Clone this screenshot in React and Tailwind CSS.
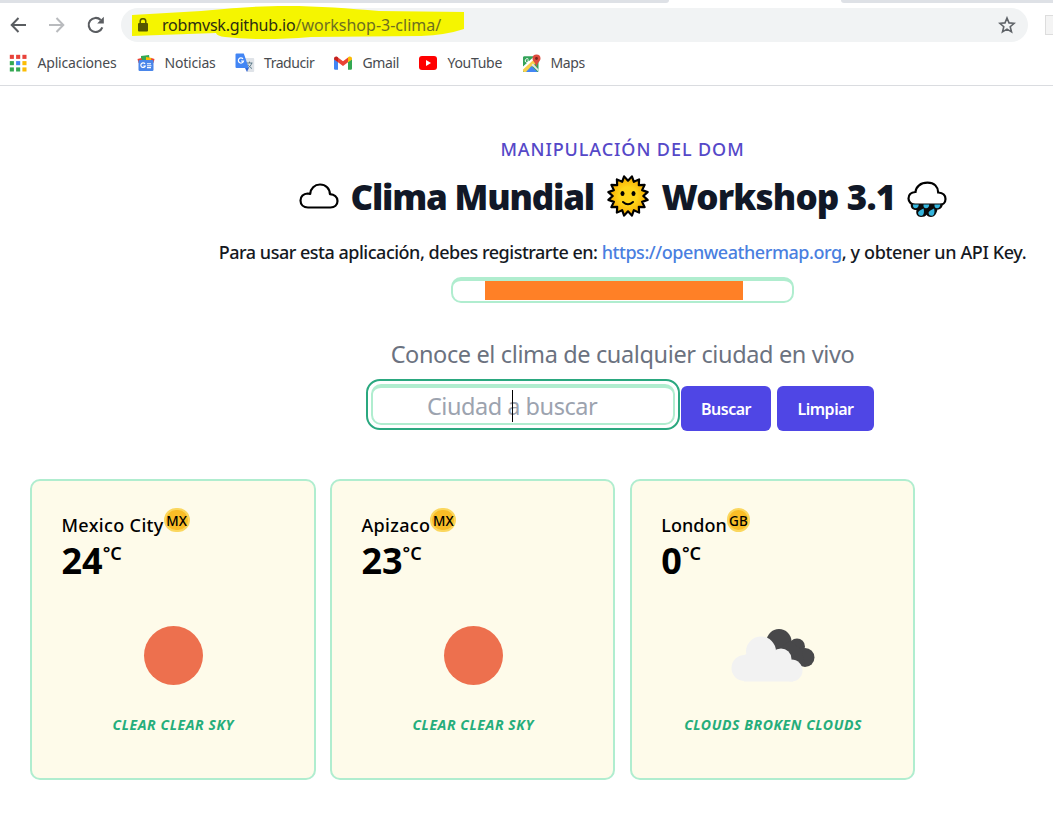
import React from "react";

const FONT = "font-['Noto_Sans','Open_Sans',sans-serif]";

function AppsIcon() {
  const colors = ["#e8433a", "#e8433a", "#e8433a", "#34a853", "#4285f4", "#fbbc05", "#34a853", "#34a853", "#fbbc05"];
  return (
    <svg width="18" height="18" viewBox="0 0 18 18">
      {colors.map((c, i) => (
        <rect key={i} x={0.8 + (i % 3) * 6.3} y={0.8 + Math.floor(i / 3) * 6.3} width="4.1" height="4.1" fill={c} />
      ))}
    </svg>
  );
}

function NewsIcon() {
  return (
    <svg width="18" height="18" viewBox="0 0 18 18">
      <path d="M4 2l8-1 1 6H4z" fill="#34a853" />
      <path d="M9 3l6 1-1 5H9z" fill="#fbbc05" />
      <path d="M.5 5l4-1 1 4-4 1zM17.5 5l-3-1-1 4 3 1z" fill="#ea4335" />
      <rect x="1.5" y="6" width="15" height="11" rx="1.2" fill="#4a86ea" />
      <path d="M8 9.8A2.3 2.3 0 1 0 8.3 12H6.3" fill="none" stroke="#fff" strokeWidth="1.2" />
      <path d="M10 9.7h4M10 11.7h4.4M10 13.6h4" stroke="#fff" strokeWidth="1.1" />
    </svg>
  );
}

function TranslateIcon() {
  return (
    <svg width="20" height="20" viewBox="0 0 20 20">
      <path d="M8 5h10.2a1 1 0 0 1 1 1v12a1 1 0 0 1-1 1H12z" fill="#dfe3e8" />
      <path d="M11.5 10h6M14.5 8.6V10M16.7 10c-.5 2.3-2 4-4 5.2M13 11.5c.8 1.8 2.3 3.2 4 4" stroke="#607d8b" strokeWidth="1" fill="none" />
      <path d="M1.6.5h7.2l5 14.5H1.6A1.1 1.1 0 0 1 .5 13.900V1.600A1.100 1.100 0 0 1 1.600.5z" fill="#4285f4" />
      <path d="M10 15h3.800L12 19z" fill="#3367d6" />
      <path d="M8 5.800A2.600 2.600 0 1 0 8.500 8H6" fill="none" stroke="#fff" strokeWidth="1.200" />
    </svg>
  );
}

function GmailIcon() {
  return (
    <svg width="18" height="14" viewBox="0 0 18 14">
      <path d="M0 3v9.500A1.200 1.200 0 0 0 1.200 13.700H4V6z" fill="#4285f4" />
      <path d="M18 3v9.500a1.200 1.200 0 0 1-1.200 1.200H14V6z" fill="#34a853" />
      <path d="M4 6.200V1.500l5 3.800 5-3.800v4.700L9 10z" fill="#ea4335" />
      <path d="M0 2.500C0 .6 2.100-.2 3.500.9L4 1.300v5L0 3.400z" fill="#c5221f" />
      <path d="M18 2.500c0-1.900-2.100-2.700-3.500-1.600l-.5.400v5l4-2.900z" fill="#fbbc04" />
    </svg>
  );
}

function YoutubeIcon() {
  return (
    <svg width="18" height="14" viewBox="0 0 18 14">
      <rect width="18" height="14" rx="3" fill="#f00" />
      <path d="M7 4l5 3-5 3z" fill="#fff" />
    </svg>
  );
}

function MapsIcon() {
  return (
    <svg width="19" height="19" viewBox="0 0 19 19">
      <rect x="1" y="2.500" width="15.500" height="15.500" rx="1" fill="#34a35a" />
      <path d="M1 17V14L13 3l3.500 3.500L5 18H2z" fill="#f7d04b" />
      <path d="M1 12.500L12 2.500l1.500 1.500L1 15.500z" fill="#fff" />
      <path d="M4 18l5.500-6 6 6z" fill="#4285f4" />
      <path d="M9.500 11l1.500-1.500 5.500 6v2.300z" fill="#e4e6ea" />
      <path d="M1 12V3.500L2 2.500h9.500z" fill="#34a35a" />
      <path d="M6.500 5.300A1.900 1.900 0 1 0 7 7H5.300" fill="none" stroke="#fff" strokeWidth="1" />
      <path d="M14.500.500a4 4 0 0 1 4 4c0 2.800-3.200 3.900-4 8.500-.8-4.600-4-5.700-4-8.500a4 4 0 0 1 4-4z" fill="#dd4b3e" />
      <circle cx="14.500" cy="4.500" r="1.400" fill="#7c231c" />
    </svg>
  );
}

function CloudIcon() {
  return (
    <svg className="shrink-0" width="40" height="28" viewBox="0 0 40 28">
      <path d="M9 25.500C4.500 25.500 1.500 22.500 1.500 18.500S4.500 11.600 8.500 11.500c1.200 0 1.900.1 2.700.4C11.500 6.500 15.500 2.500 21 2.500c5.800 0 9.800 4.100 9.900 9.600 4.200.3 7.600 2.700 7.600 6.900 0 4-3 6.500-7 6.500z" fill="#fff" stroke="#000" strokeWidth="2.200" strokeLinejoin="round" />
    </svg>
  );
}

function SunIcon() {
  const pts = [];
  for (let i = 0; i < 32; i++) {
    const a = (i * Math.PI) / 16 + Math.PI / 16;
    const r = i % 2 ? 15.300 : 20;
    pts.push(`${21 + r * Math.cos(a)},${21 + r * Math.sin(a)}`);
  }
  return (
    <svg width="42" height="42" viewBox="0 0 42 42">
      <defs>
        <radialGradient id="sun">
          <stop offset="45%" stopColor="#ffd51a" />
          <stop offset="100%" stopColor="#f7a900" />
        </radialGradient>
      </defs>
      <polygon points={pts.join(" ")} fill="url(#sun)" stroke="#000" strokeWidth="2.200" strokeLinejoin="round" />
      <ellipse cx="15.500" cy="18.500" rx="2" ry="2.600" />
      <ellipse cx="26.500" cy="18.500" rx="2" ry="2.600" />
      <path d="M16 27q5 4.500 10 0" fill="none" stroke="#000" strokeWidth="2" strokeLinecap="round" />
    </svg>
  );
}

function RainIcon() {
  return (
    <svg width="40" height="37" viewBox="0 0 40 37">
      <path d="M8 24C4 23.500 1.500 20.500 1.500 17.500c0-4 3-6.200 7-6.500C9 5.500 13.500 1.700 20.500 1.700S31 6 31.200 11.500c4.500.3 7.300 2.700 7.300 6.500 0 3.500-2.500 6-6 6z" fill="#fff" stroke="#000" strokeWidth="2.200" />
      <path d="M4 22.500H35.500c.5 3.500-1.500 6-5 6C29.500 33 27.500 36 24 36c-2.500 0-4-1-4.500-2.200C18.500 35.200 17 36 14 36 10.500 36 8.500 33 9.500 29 5 29 3 26.500 4 22.500z" fill="#0a0a0a" />
      <g fill="#35b5dd">
        <path d="M6 23.500h5.800c-.3 2.500-1.300 3.800-3.200 3.800-1.900 0-3-1.700-2.600-3.800z" />
        <path d="M16.500 23.500h5.800c-.3 2.500-1.300 3.800-3.200 3.800-1.900 0-3-1.700-2.600-3.800z" />
        <path d="M27.500 23.500h5.800c-.3 2.500-1.300 3.800-3.200 3.800-1.900 0-3-1.700-2.600-3.800z" />
        <path d="M16.500 27.500c1.100 3.500.4 7.300-2.500 7.300-1.800 0-2.900-1.200-2.900-2.800 0-2 3-3 5.400-4.500z" />
        <path d="M27 27.500c1.100 3.500.4 7.300-2.500 7.300-1.800 0-2.900-1.200-2.900-2.800 0-2 3-3 5.400-4.500z" />
      </g>
    </svg>
  );
}

function BrokenCloudsIcon() {
  return (
    <svg width="84" height="54" viewBox="0 0 84 54">
      <g fill="#48484a">
        <circle cx="48" cy="13.500" r="12.500" />
        <circle cx="66" cy="18.500" r="8" />
        <circle cx="74" cy="29.500" r="9.500" />
        <path d="M45 22L59 13 71 22 74 38 60 38z" />
      </g>
      <g fill="#f2f2f2">
        <circle cx="13.500" cy="40" r="13" />
        <circle cx="30" cy="23.500" r="15" />
        <circle cx="50" cy="31" r="10.500" />
        <circle cx="60.500" cy="42.500" r="11" />
        <path d="M13 27L30 20 50 26 62 42V53.500H13z" />
      </g>
    </svg>
  );
}

const bookmarks = [
  { label: "Aplicaciones", icon: <AppsIcon />, box: "w-[128px]", pad: "w-[28.5px]", text: "tracking-[-0.2px]" },
  { label: "Noticias", icon: <NewsIcon />, box: "w-[98px]", pad: "w-[27.5px]", text: "tracking-[-0.2px]" },
  { label: "Traducir", icon: <TranslateIcon />, box: "w-[99px]", pad: "w-[29px]", text: "tracking-[-0.45px]" },
  { label: "Gmail", icon: <GmailIcon />, box: "w-[85px]", pad: "w-[28.5px]", text: "tracking-[-0.35px]" },
  { label: "YouTube", icon: <YoutubeIcon />, box: "w-[103px]", pad: "w-[28.5px]", text: "tracking-[-0.3px]" },
  { label: "Maps", icon: <MapsIcon />, box: "w-[80px]", pad: "w-[28.5px]", text: "tracking-[-0.35px]" },
];

function Browser() {
  return (
    <header className="relative h-[86px] border-b border-[#dadce0] bg-white">
      <div className="flex h-[3px] justify-between">
        <div className="w-[669px] rounded-br-[4px] bg-[#dee1e6]" />
        <div className="w-[212px] rounded-bl-[4px] bg-[#dee1e6]" />
      </div>
      <div className="flex h-[44px] items-center pl-[10px]">
        <svg className="mr-[21px] shrink-0" width="17" height="16" viewBox="0 0 17 16" fill="none" stroke="#5a5d61" strokeWidth="2"><path d="M8.500 1L1.700 8l6.800 7M1.700 8H16" /></svg>
        <svg className="mr-[22px] shrink-0" width="17" height="16" viewBox="0 0 17 16" fill="none" stroke="#b9bbbe" strokeWidth="2"><path d="M8.500 1l6.800 7-6.800 7M15.300 8H1" /></svg>
        <svg className="shrink-0" width="18" height="18" viewBox="0 0 18 18"><path d="M15.300 11.300A7 7 0 1 1 13.700 4" fill="none" stroke="#5a5d61" strokeWidth="2.100" /><path d="M16.800.8V7.500H10.200z" fill="#5a5d61" /></svg>
        <div className="relative ml-[16px] flex h-[34px] w-[907px] shrink-0 items-center rounded-full bg-[#f1f3f4]">
          <svg className="absolute left-[10px] top-[-4px]" width="334" height="37" viewBox="0 0 334 37">
            <path d="M1 11L70 7 93 5C155-1 200 3 248 7L333 8V25Q315 31 290 32L180 33Q130 37 94 33Q86 32 85 29L1 32z" fill="#f5f500" />
          </svg>
          <svg className="relative ml-[17px]" width="10" height="14" viewBox="0 0 10 14"><rect y="5" width="10" height="8.500" rx="1" fill="#555800" /><path d="M2.200 6V3.500a2.800 2.800 0 0 1 5.600 0V6" fill="none" stroke="#555800" strokeWidth="1.500" /></svg>
          <span className="relative ml-[14px] whitespace-nowrap text-[16px] leading-5 tracking-[-0.2px] text-[#2c2e12]">robmvsk.github.io<span className="tracking-normal text-[#6d6f20]">/workshop-3-clima/</span></span>
          <svg className="absolute right-[12px] top-[8px]" width="18" height="18" viewBox="0 0 18 18"><path d="M9 2l2 4.900 5.200.4-4 3.400 1.300 5.200L9 13.100l-4.500 2.800 1.300-5.200-4-3.400L7 6.900z" fill="none" stroke="#5f6368" strokeWidth="1.600" /></svg>
        </div>
        <div className="ml-[17px] h-[20px] w-[8px] shrink-0 border border-r-0 border-[#ddd] bg-[#f4f4f4]" />
      </div>
      <nav className="flex h-[32px] items-center pl-[9px]">
        {bookmarks.map((b) => (
          <div key={b.label} className={`flex shrink-0 items-center text-[14px] text-[#484b4f] ${b.box}`}>
            <span className={`shrink-0 ${b.pad}`}>{b.icon}</span>
            <span className={`whitespace-nowrap leading-5 ${b.text}`}>{b.label}</span>
          </div>
        ))}
      </nav>
    </header>
  );
}

const cities = [
  { name: "Mexico City", code: "MX", temp: "24", icon: "sun", text: "CLEAR CLEAR SKY", tracking: "tracking-[0.35px]" },
  { name: "Apizaco", code: "MX", temp: "23", icon: "sun", text: "CLEAR CLEAR SKY", tracking: "tracking-[0.35px]" },
  { name: "London", code: "GB", temp: "0", icon: "cloud", text: "CLOUDS BROKEN CLOUDS", tracking: "tracking-[0.05px]" },
];

function Card({ c }) {
  return (
    <li className="flex h-[301px] w-[285.6px] flex-col rounded-[10px] border-2 border-[#b0edcf] bg-[#fefbea]">
      <h2 className="ml-[29.5px] mt-[29px] flex h-[31px] items-start text-[18px] font-medium leading-[30px] text-black">
        <span className={c.tracking}>{c.name}</span>
        <span className={`mt-[-2px] flex h-[24px] items-center justify-center rounded-full border-2 border-[#fbd75e] bg-[#f9bd27] pt-px text-[13.5px] font-medium leading-[24px] ${c.code === "MX" ? "w-[26px]" : "w-[23px]"}`}>{c.code}</span>
      </h2>
      <div className="ml-[29.5px] mt-[-1px] flex h-[42px] items-start text-black">
        <span className="text-[36px] font-bold leading-[42px]">{c.temp}</span>
        <span className="mt-[1px] text-[18px] font-semibold leading-[24px]">°C</span>
      </div>
      <div className="mt-[23px] flex h-[100px] items-center justify-center pl-[1.5px]">
        {c.icon === "sun" ? <div className="h-[59px] w-[59px] rounded-full bg-[#ed704e]" /> : <BrokenCloudsIcon />}
      </div>
      <p className="mt-[10px] pl-px text-center text-[14px] font-bold italic leading-5 tracking-[0.57px] text-[#25ad7b]">{c.text}</p>
    </li>
  );
}

export default function App() {
  return (
    <div className={`h-[820px] w-[1053px] overflow-hidden bg-white ${FONT}`}>
      <Browser />
      <section className="flex flex-col items-center pl-[192px] pt-[49px]">
        <p className="h-[28px] whitespace-nowrap text-[18px] font-medium leading-[28px] tracking-[0.92px] text-[#5548c8]">MANIPULACIÓN DEL DOM</p>
        <h1 className="flex h-[66px] w-[648px] items-center whitespace-nowrap text-[35px] font-black leading-[44px] text-[#111827]">
          <CloudIcon />
          <span className="ml-[12px] w-[256px] pt-[1px] tracking-[-1.2px]">Clima Mundial</span>
          <span className="w-[42px] shrink-0"><SunIcon /></span>
          <span className="ml-[13px] w-[245px] pt-[1px] tracking-[-0.85px]">Workshop 3.1</span>
          <span className="mt-[6px] w-[40px] shrink-0"><RainIcon /></span>
        </h1>
        <p className="mt-[9px] h-[28px] whitespace-nowrap text-[18px] font-medium leading-[28px] tracking-[-0.49px] text-[#15191f]">
          Para usar esta aplicación, debes registrarte en: <a className="tracking-[-0.45px] text-[#4a7fe0]">https://openweathermap.org</a><span className="tracking-[-0.38px]">, y obtener un API Key.</span>
        </p>
        <div className="mt-[11px] flex h-[26px] w-[343px] rounded-[10px] border-2 border-t-4 border-[#b0edcf] bg-white pl-[32px]">
          <div className="h-[19px] w-[258px] bg-[#ff8026]" />
        </div>
        <p className="mt-[35px] h-[33px] whitespace-nowrap text-[23.5px] leading-[32px] tracking-[-0.37px] text-[#6b7280]">Conoce el clima de cualquier ciudad en vivo</p>
        <div className="mt-[8px] flex h-[52px] w-[513px] items-start">
          <div className="relative h-[51px] w-[314px] shrink-0 rounded-[14px] border-2 border-[#2aa87f] bg-white p-[3px]">
            <div className="h-full rounded-[10px] border-2 border-t-4 border-[#b0edcf]">
              <div className="pl-[54px] text-[23.5px] leading-[37px] tracking-[-0.48px] text-[#9ca3af]">Ciudad a buscar</div>
            </div>
            <div className="absolute left-[144px] top-[9px] h-[32px] w-px bg-black" />
          </div>
          <button className="ml-[1px] mt-[7px] h-[45px] w-[90px] shrink-0 rounded-[6px] bg-[#4f46e5] text-[16px] font-semibold tracking-[-0.5px] text-white">Buscar</button>
          <button className="ml-[6px] mt-[7px] h-[45px] w-[97px] shrink-0 rounded-[6px] bg-[#4f46e5] text-[16px] font-semibold tracking-[-0.5px] text-white">Limpiar</button>
        </div>
      </section>
      <ul className="mt-[48px] flex gap-[14.3px] pl-[30px]">
        {cities.map((c) => <Card key={c.name} c={c} />)}
      </ul>
    </div>
  );
}
